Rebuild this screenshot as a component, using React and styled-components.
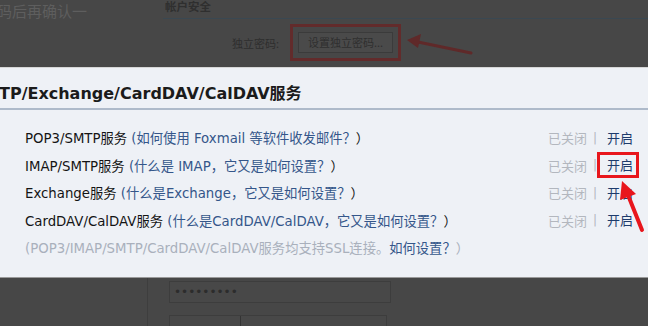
import React from "react";
import styled, { createGlobalStyle } from "styled-components";

const Global = createGlobalStyle`
  html, body { margin: 0; padding: 0; background: #474747; }
  body { font-family: "DejaVu Sans", "Noto Sans CJK SC", sans-serif; }
`;

const Page = styled.div`
  position: relative;
  width: 648px;
  height: 326px;
  overflow: hidden;
  background: #474747;
  display: flex;
  flex-direction: column;
  font-family: "DejaVu Sans", "Noto Sans CJK SC", sans-serif;
`;

const TopBar = styled.div`
  height: 67px;
  display: flex;
  flex-shrink: 0;
`;

const TopLeft = styled.div`
  width: 166px;
  flex-shrink: 0;
  font-family: "Noto Sans CJK SC", sans-serif;
  font-size: 15px;
  line-height: 20px;
  color: #5e5e5e;
  margin-left: -3px;
  padding-top: 1px;
`;

const TopRight = styled.div`
  flex: 1;
  display: flex;
  flex-direction: column;
`;

const SectionHead = styled.div`
  font-family: "Noto Sans CJK SC", sans-serif;
  font-size: 11.5px;
  font-weight: 700;
  line-height: 12px;
  color: #2f2f2f;
  padding: 0 0 6px 2px;
  border-bottom: 1px solid #3a4852;
`;

const FormRow = styled.div`
  display: flex;
  align-items: center;
  margin-top: 5px;
  padding-left: 69px;
`;

const FormLabel = styled.span`
  font-family: "Noto Sans CJK SC", sans-serif;
  font-size: 11px;
  color: #2e2e2e;
  width: 58px;
`;

const DarkFrame = styled.div`
  border: 3px solid #622b2b;
  padding: 5px 5px;
  display: flex;
`;

const DimButton = styled.div`
  width: 93px;
  height: 19px;
  border: 1px solid #3b3b3b;
  background: #4a4a4a;
  color: #2f2f2f;
  font-family: "Noto Sans CJK SC", sans-serif;
  font-size: 11px;
  line-height: 19px;
  text-align: center;
`;

const Modal = styled.div`
  height: 211px;
  flex-shrink: 0;
  background: #eef1f6;
  border-top: 1px solid #d6d6d6;
  border-bottom: 1px solid #9a9a9a;
  box-sizing: border-box;
  display: flex;
  flex-direction: column;
`;

const Title = styled.div`
  font-size: 16px;
  font-weight: 700;
  line-height: 20px;
  color: #1b1b1b;
  padding: 16px 0 4px 0;
  margin-left: -1px;
  border-bottom: 2px solid #aebaca;
  white-space: nowrap;
`;

const List = styled.div`
  padding: 14px 9px 0 25px;
  display: flex;
  flex-direction: column;
`;

const Row = styled.div`
  height: 27.5px;
  display: flex;
  align-items: center;
  justify-content: space-between;
  font-size: 13.3px;
  white-space: nowrap;
`;

const Label = styled.span`
  color: ${(p) => (p.$muted ? "#a9b0bc" : "#141414")};
`;

const Help = styled.span`
  color: #34568a;
`;

const Status = styled.div`
  display: flex;
  align-items: center;
  font-family: "Noto Sans CJK SC", sans-serif;
  font-size: 13px;
`;

const Closed = styled.span`
  color: #b3b7be;
`;

const Pipe = styled.span`
  color: #b3b7be;
  margin-left: 6px;
  font-family: "DejaVu Sans", sans-serif;
  font-size: 12px;
`;

const OpenLink = styled.span`
  color: #1d3b6c;
  border: 3px solid ${(p) => (p.$hot ? "#e8161c" : "transparent")};
  padding: 0 3px 0 7px;
  line-height: 20px;
`;

const Bottom = styled.div`
  flex: 1;
  display: flex;
`;

const BottomLeft = styled.div`
  width: 147px;
  border-right: 1px solid #3e3e3e;
  flex-shrink: 0;
`;

const BottomBody = styled.div`
  padding: 3px 0 0 21px;
  display: flex;
  flex-direction: column;
  gap: 12px;
`;

const Input = styled.div`
  width: 216px;
  height: 20px;
  border: 1px solid #3d3d3d;
  background: #484848;
  display: flex;
  align-items: center;
  padding-left: 4px;
  font-family: "DejaVu Sans", sans-serif;
  font-size: 12px;
  color: #2c2c2c;
`;

const SplitInput = styled(Input)`
  padding-left: 0;
`;

const Divider = styled.span`
  margin-left: 70px;
  width: 1px;
  height: 100%;
  background: #333;
`;

const Overlay = styled.svg`
  position: absolute;
  left: 0;
  top: 0;
  pointer-events: none;
`;

const rows = [
  { label: "POP3/SMTP服务", help: "如何使用 Foxmail 等软件收发邮件？" },
  { label: "IMAP/SMTP服务", help: "什么是 IMAP，它又是如何设置？", hot: true },
  { label: "Exchange服务", help: "什么是Exchange，它又是如何设置？" },
  { label: "CardDAV/CalDAV服务", help: "什么是CardDAV/CalDAV，它又是如何设置？" },
];

export default function App() {
  return (
    <>
      <Global />
      <Page>
        <TopBar>
          <TopLeft>码后再确认一</TopLeft>
          <TopRight>
            <SectionHead>帐户安全</SectionHead>
            <FormRow>
              <FormLabel>独立密码:</FormLabel>
              <DarkFrame>
                <DimButton>设置独立密码...</DimButton>
              </DarkFrame>
            </FormRow>
          </TopRight>
        </TopBar>
        <Modal>
          <Title>TP/Exchange/CardDAV/CalDAV服务</Title>
          <List>
            {rows.map((r) => (
              <Row key={r.label}>
                <span>
                  <Label>{r.label} </Label>
                  <Help>({r.help}</Help>
                  <Label>）</Label>
                </span>
                <Status>
                  <Closed>已关闭</Closed>
                  <Pipe>|</Pipe>
                  <OpenLink $hot={r.hot}>开启</OpenLink>
                </Status>
              </Row>
            ))}
            <Row>
              <span>
                <Label $muted>(POP3/IMAP/SMTP/CardDAV/CalDAV服务均支持SSL连接。</Label>
                <Help>如何设置？</Help>
                <Label $muted>）</Label>
              </span>
            </Row>
          </List>
        </Modal>
        <Bottom>
          <BottomLeft />
          <BottomBody>
            <Input>•••••••••</Input>
            <SplitInput>
              <Divider />
            </SplitInput>
          </BottomBody>
        </Bottom>
        <Overlay width="648" height="326" viewBox="0 0 648 326">
          <line x1="471" y1="53" x2="418" y2="42" stroke="#5f2929" strokeWidth="3" strokeLinecap="round" />
          <polygon points="407,40 421,34 418,48" fill="#5f2929" />
          <line x1="642" y1="230" x2="628" y2="195" stroke="#e8161c" strokeWidth="4" strokeLinecap="round" />
          <polygon points="622,181 620,200 636,194" fill="#e8161c" />
        </Overlay>
      </Page>
    </>
  );
}
